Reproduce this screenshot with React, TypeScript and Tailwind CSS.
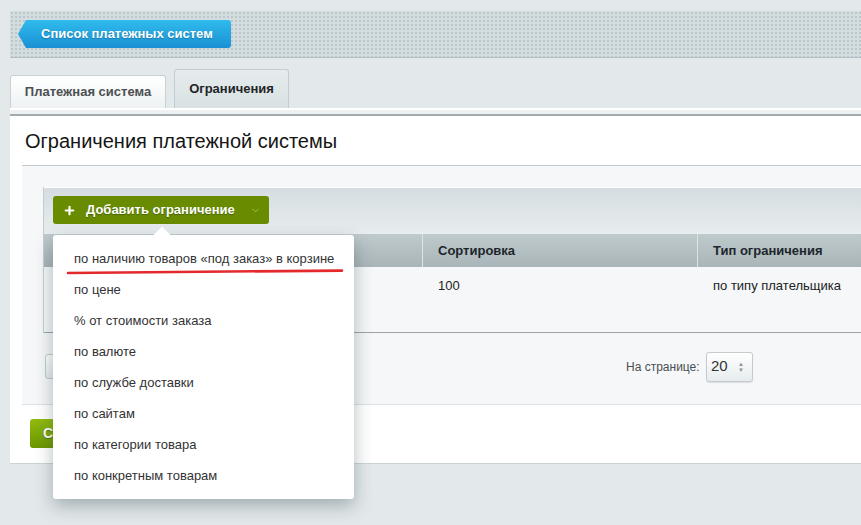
import { ChevronDown, Plus } from 'lucide-react';

const restrictions = [
    'по наличию товаров «под заказ» в корзине',
    'по цене',
    '% от стоимости заказа',
    'по валюте',
    'по службе доставки',
    'по сайтам',
    'по категории товара',
    'по конкретным товарам',
];

function AddMenu() {
    return (
        <div className="absolute left-[53px] top-[235px] w-[301px] h-[264px] rounded-[3px] bg-white pt-[8px] shadow-[0_7px_18px_rgba(40,60,70,0.35)]">
            {/* notch */}
            <div className="absolute left-[103px] top-[-6px] w-[12px] h-[12px] rotate-45 bg-white" />
            {/* red marker under the first item */}
            <svg className="absolute left-[13px] top-[33px]" width="278" height="7" viewBox="0 0 278 7">
                <path d="M2 5 C 80 4.2, 200 3.2, 276 2.6" stroke="#e3292c" strokeWidth="2.6" strokeLinecap="round" fill="none" />
            </svg>
            <div className="relative">
                {restrictions.map(item => (
                    <div key={item} className="h-[31px] leading-[31px] pl-[21px] text-[13px] text-[#333]">
                        {item}
                    </div>
                ))}
            </div>
        </div>
    );
}

export default function App() {
    return (
        <div className="relative w-[861px] h-[525px] overflow-hidden bg-[#e3e9ea] font-['Liberation_Sans',Arial,sans-serif] text-[13px]">
            {/* Top bar */}
            <div className="ml-[10px] mt-[11px] h-[47px] border-b border-[#b4bfc3] bg-[#d3dcdf] bg-[radial-gradient(#bcc7cb_1px,transparent_1px)] bg-[length:4px_4px] pl-[8px] pt-[9px]">
                <div className="flex h-[28px] w-[213px] items-center pl-[23px] rounded-r-[3px] bg-gradient-to-b from-[#30bbec] to-[#1a90d4] font-bold text-white [text-shadow:0_1px_1px_rgba(0,0,0,0.25)] [clip-path:polygon(8px_0,100%_0,100%_100%,8px_100%,0_50%)]">
                    Список платежных систем
                </div>
            </div>

            {/* Tabs */}
            <div className="ml-[10px] mt-[11px] flex h-[39px] items-end gap-[8px]">
                <div className="flex h-[33px] w-[156px] items-center justify-center rounded-t-[3px] border border-b-0 border-[#c9d1d3] bg-gradient-to-b from-white to-[#eef2f3] font-bold text-[#4b4f52]">
                    Платежная система
                </div>
                <div className="flex h-[39px] w-[115px] items-center justify-center rounded-t-[3px] border border-b-0 border-[#c3cccf] bg-gradient-to-b from-[#e6ecee] to-[#d9e1e3] font-bold text-[#1f2427]">
                    Ограничения
                </div>
            </div>
            <div className="ml-[10px] h-[6px] border-t-2 border-white bg-[#edf1f2]" />

            {/* Panel */}
            <div className="ml-[10px] h-[350px] border-t-2 border-b border-t-[#a2acaf] border-b-[#cbd3d5] bg-white">
                <div className="flex h-[49px] items-center pl-[15px] text-[20px] text-[#151515]">
                    Ограничения платежной системы
                </div>

                <div className="ml-[12px] border-t border-b border-t-[#c3cbce] border-b-[#dae2e8] bg-[#f5f7f8] pl-[21px] pt-[21px]">
                    <div className="border-l border-[#c6cdd0]">
                        {/* Toolbar */}
                        <div className="h-[47px] border-t border-white bg-gradient-to-b from-[#d5dde0] to-[#e8edef] pl-[9px] pt-[8px]">
                            <div className="flex h-[28px] w-[216px] items-center rounded-[3px] bg-[#688b00] pl-[10px] font-bold text-white [text-shadow:0_1px_1px_rgba(0,0,0,0.3)]">
                                <Plus size={13} strokeWidth={4} />
                                <span className="ml-[10px]">Добавить ограничение</span>
                                <ChevronDown size={11} className="ml-[15px] text-[#a9c35a]" />
                            </div>
                        </div>

                        {/* Header */}
                        <div className="flex h-[33px] items-center bg-gradient-to-b from-[#bfcacd] to-[#a9b5b8] font-bold text-[#1e262b]">
                            <div className="w-[378px] h-full" />
                            <div className="flex h-full w-[275px] items-center border-l border-[#dde4e6] pl-[15px]">Сортировка</div>
                            <div className="flex h-full flex-1 items-center border-l border-[#dde4e6] pl-[15px]">Тип ограничения</div>
                        </div>

                        {/* Row */}
                        <div className="flex h-[66px] border-b border-[#9ba4a7] bg-[#f5f7f8] pt-[11px] leading-[16px] text-[#222]">
                            <div className="w-[378px]" />
                            <div className="w-[275px] pl-[16px]">100</div>
                            <div className="flex-1 pl-[16px]">по типу плательщика</div>
                        </div>
                    </div>

                    {/* Footer */}
                    <div className="flex h-[71px] items-center pb-[4px]">
                        <div className="ml-[2px] h-[25px] w-[80px] rounded-[3px] border border-[#c3cbce] bg-gradient-to-b from-white to-[#e4eaec]" />
                        <div className="ml-[501px] w-[80px] text-[12px] text-[#4a4f52]">На странице:</div>
                        <div className="flex h-[30px] w-[47px] items-center justify-between rounded-[3px] border border-[#c3cbce] bg-gradient-to-b from-white to-[#e6ecee] pl-[4px] pr-[8px] text-[15px] text-[#333] shadow-[0_1px_1px_rgba(0,0,0,0.1)]">
                            <span>20</span>
                            <span className="flex flex-col text-[6px] leading-[6px] text-[#8a9396]">
                                <span>▲</span>
                                <span>▼</span>
                            </span>
                        </div>
                    </div>
                </div>

                {/* Save button, mostly covered by the menu */}
                <div className="ml-[20px] mt-[14px] w-[23px] overflow-hidden">
                    <div className="flex h-[29px] w-[110px] items-center rounded-[3px] bg-gradient-to-b from-[#92bb10] to-[#6b9600] pl-[13px] text-[14px] font-bold text-white [text-shadow:0_1px_1px_rgba(0,0,0,0.3)]">
                        С
                    </div>
                </div>
            </div>

            <AddMenu />
        </div>
    );
}
